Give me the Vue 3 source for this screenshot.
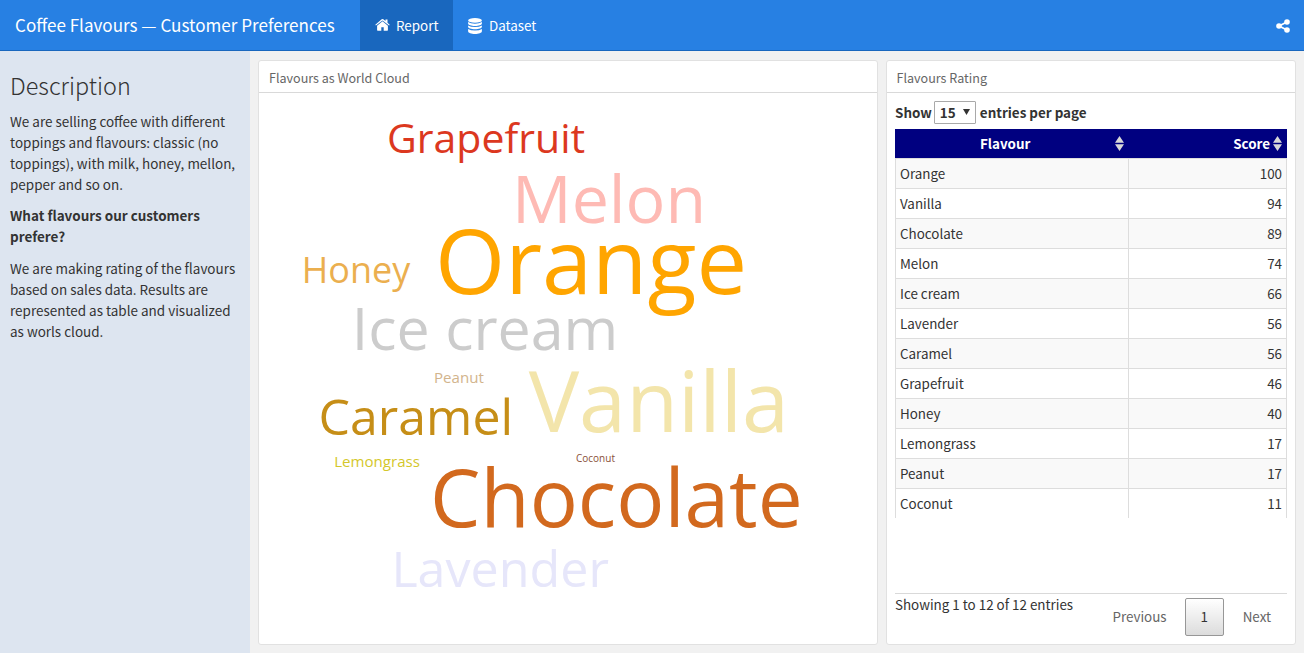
<script setup>
const rows = [
  ['Orange', 100], ['Vanilla', 94], ['Chocolate', 89], ['Melon', 74],
  ['Ice cream', 66], ['Lavender', 56], ['Caramel', 56], ['Grapefruit', 46],
  ['Honey', 40], ['Lemongrass', 17], ['Peanut', 17], ['Coconut', 11],
]
// Word positions are canvas coordinates; font size is proportional to score.
const words = [
  { t: 'Orange', x: 176, y: 201, s: 90.2, c: '#ffa500' },
  { t: 'Vanilla', x: 269.7, y: 339, s: 84.6, c: '#f3e5ab' },
  { t: 'Chocolate', x: 171.1, y: 434, s: 80.1, c: '#d2691e' },
  { t: 'Melon', x: 253, y: 130, s: 66.3, c: '#febab4' },
  { t: 'Ice cream', x: 92.8, y: 257, s: 59.1, c: '#cccccc' },
  { t: 'Lavender', x: 132.4, y: 494, s: 50.2, c: '#e6e6fa' },
  { t: 'Caramel', x: 59.6, y: 342, s: 50, c: '#c68e17' },
  { t: 'Grapefruit', x: 128, y: 60, s: 41, c: '#dc381f' },
  { t: 'Honey', x: 42.8, y: 190, s: 36, c: '#ebaf4f' },
  { t: 'Lemongrass', x: 75.2, y: 374, s: 15.1, c: '#d4c72b' },
  { t: 'Peanut', x: 175, y: 290, s: 15.1, c: '#d2b48c' },
  { t: 'Coconut', x: 317, y: 369, s: 10, c: '#8a5038' },
]
</script>

<template>
  <div class="page">
    <header class="navbar">
      <span class="brand">Coffee Flavours — Customer Preferences</span>
      <a class="tab active">
        <svg class="home" width="15" height="14" viewBox="0 0 15 14"><path fill="#fff" d="M7.5 3.300 12.900 7.700V12.100q0 .6-.6.6H8.700V9.200H6.300V12.700H2.700q-.6 0-.6-.6V7.700ZM7.500.9Q7.900.9 8.300 1.300L10.500 3.100V1.500h2v3.300L14.700 6.700 14.100 7.400 7.500 2.400.9 7.400.3 6.700 6.700 1.300Q7.100.9 7.500.9Z" /></svg>
        <span>Report</span>
      </a>
      <a class="tab">
        <svg class="db" width="14" height="16" viewBox="0 0 14 16"><g fill="#fff"><ellipse cx="7" cy="2.400" rx="6.900" ry="2.400" /><path d="M.1 4.100Q2.500 5.700 7 5.700t6.900-1.600v1.300C13.900 6.900 10.700 7.900 7 7.900S.1 6.900.1 5.400ZM.1 7.500Q2.500 9.100 7 9.100t6.900-1.600v1.300c0 1.500-3.200 2.500-6.900 2.500S.1 10.300.1 8.800ZM.1 11Q2.500 12.600 7 12.600t6.900-1.600v2.300C13.900 15 10.700 16 7 16S.1 15 .1 13.300Z" /></g></svg>
        <span>Dataset</span>
      </a>
      <svg class="share" width="14" height="14" viewBox="0 0 14 14"><path d="M11 3 3 7l8 4" fill="none" stroke="#fff" stroke-width="1.8" /><g fill="#fff"><circle cx="11" cy="3" r="2.800" /><circle cx="3" cy="7" r="2.800" /><circle cx="11" cy="11" r="2.800" /></g></svg>
    </header>
    <main class="body">
      <aside class="sidebar">
        <h3>Description</h3>
        <p>We are selling coffee with different<br />toppings and flavours: classic (no<br />toppings), with milk, honey, mellon,<br />pepper and so on.</p>
        <p class="strong">What flavours our customers<br />prefere?</p>
        <p class="last">We are making rating of the flavours<br />based on sales data. Results are<br />represented as table and visualized<br />as worls cloud.</p>
      </aside>
      <section class="card cloud-card">
        <div class="card-title">Flavours as World Cloud</div>
        <svg class="cloud" width="618" height="551" viewBox="0 0 618 551">
          <text v-for="w in words" :key="w.t" :x="w.x" :y="w.y" :font-size="w.s" :fill="w.c">{{ w.t }}</text>
        </svg>
      </section>
      <section class="card rating">
        <div class="card-title">Flavours Rating</div>
        <div class="content">
          <div class="length">
            <span>Show</span>
            <span class="select">15<svg width="7" height="6" viewBox="0 0 7 6"><path d="M0 0h7L3.500 6z" fill="#333" /></svg></span>
            <span>entries per page</span>
          </div>
          <div class="thead">
            <div class="th name">Flavour<svg class="sort" width="9" height="15" viewBox="0 0 9 15"><path d="M4.500 0 9 6.700H0zM0 8.300h9L4.500 15z" fill="#d8d8d8" /></svg></div>
            <div class="th score">Score<svg class="sort" width="9" height="15" viewBox="0 0 9 15"><path d="M4.500 0 9 6.700H0zM0 8.300h9L4.500 15z" fill="#d8d8d8" /></svg></div>
          </div>
          <div class="tbody">
            <div v-for="r in rows" :key="r[0]" class="row">
              <div class="cell name">{{ r[0] }}</div>
              <div class="cell score">{{ r[1] }}</div>
            </div>
          </div>
          <div class="footer">
            <div class="info">Showing 1 to 12 of 12 entries</div>
            <div class="pager">
              <span class="pg prev">Previous</span>
              <span class="pg current">1</span>
              <span class="pg next">Next</span>
            </div>
          </div>
        </div>
      </section>
    </main>
  </div>
</template>

<style>
body { margin: 0; overflow: hidden; }
</style>
<style scoped>
* { box-sizing: border-box; }
.page {
  width: 1304px; height: 653px; display: flex; flex-direction: column;
  background: #f1f1f1; color: #333; white-space: nowrap;
  font-family: "Noto Sans CJK SC", "Open Sans", sans-serif; font-size: 13.400px; line-height: 21px;
}
.navbar { height: 51px; flex: none; display: flex; background: #2780e3; border-bottom: 1px solid #1967be; color: #fff; }
.brand { width: 360px; padding-left: 15px; font-size: 17.060px; line-height: 50px; height: 50px; }
.tab { display: flex; align-items: center; height: 50px; padding-left: 15px; width: 93px; line-height: 50px; }
.home { margin-right: 6px; }
.tab.active { background: #1967be; }
.db { margin: 1px 7px 0 0; }
.share { margin: 19px 14px 0 auto; }
.body { flex: 1; display: flex; min-height: 0; }
.sidebar { width: 250px; background: #dde5f0; padding: 19px 10px 0; font-size: 13.480px; }
h3 { margin: 0 0 11px; font-size: 23.400px; line-height: 30px; font-weight: 300; }
p { margin: 10px 0 0; }
.strong { font-weight: 700; }
.last { margin-top: 11px; }
.card { background: #fff; border: 1px solid #e1e1e1; border-radius: 3px; margin: 9px 0 8px 8px; }
.cloud-card { width: 620px; }
.rating { width: 410px; }
.card-title { height: 32px; border-bottom: 1px solid #d9d9d9; padding-left: 10px; font-size: 12.550px; line-height: 34px; color: #666; }
.rating .card-title { padding-left: 9.500px; }
.cloud { display: block; font-family: "Open Sans", sans-serif; }
.content { padding: 8px 8px 0; }
.length { height: 28px; display: flex; font-weight: 700; font-size: 13.430px; line-height: 22px; }
.select { display: flex; align-items: center; justify-content: space-between; width: 42px; height: 23px; margin: 0 4px 0 2px; padding: 0 5px 1px; line-height: 20px; border: 1px solid #a9a9a9; border-radius: 1px; }
.select svg { margin-bottom: 1px; }
.thead { display: flex; height: 29px; background: #000080; color: #fff; font-weight: 700; line-height: 29px; }
.th { display: flex; align-items: center; }
.th.name { width: 233px; justify-content: space-between; padding: 0 4px 0 85px; }
.th.score { width: 159px; justify-content: flex-end; gap: 3px; padding-right: 5px; }
.tbody { border: 1px solid #ddd; border-width: 0 1px; height: 360px; }
.row { display: flex; height: 30px; border-top: 1px solid #ddd; line-height: 28px; }
.row:nth-child(odd) { background: #f9f9f9; }
.cell.name { width: 233px; padding-left: 4px; border-right: 1px solid #ddd; }
.cell.score { flex: 1; text-align: right; padding-right: 4px; }
.footer { margin-top: 75px; border-top: 1px solid #d9d9d9; display: flex; justify-content: space-between; }
.info { line-height: 21px; }
.pager { display: flex; padding-top: 4px; line-height: 36px; color: #666; }
.current { width: 39px; height: 38px; margin: 0 19px 0 18px; text-align: center; line-height: 35px; color: #333; border: 1px solid #979797; border-radius: 2px; background: linear-gradient(#fff, #dcdcdc); }
.next { padding-right: 16px; }
</style>
